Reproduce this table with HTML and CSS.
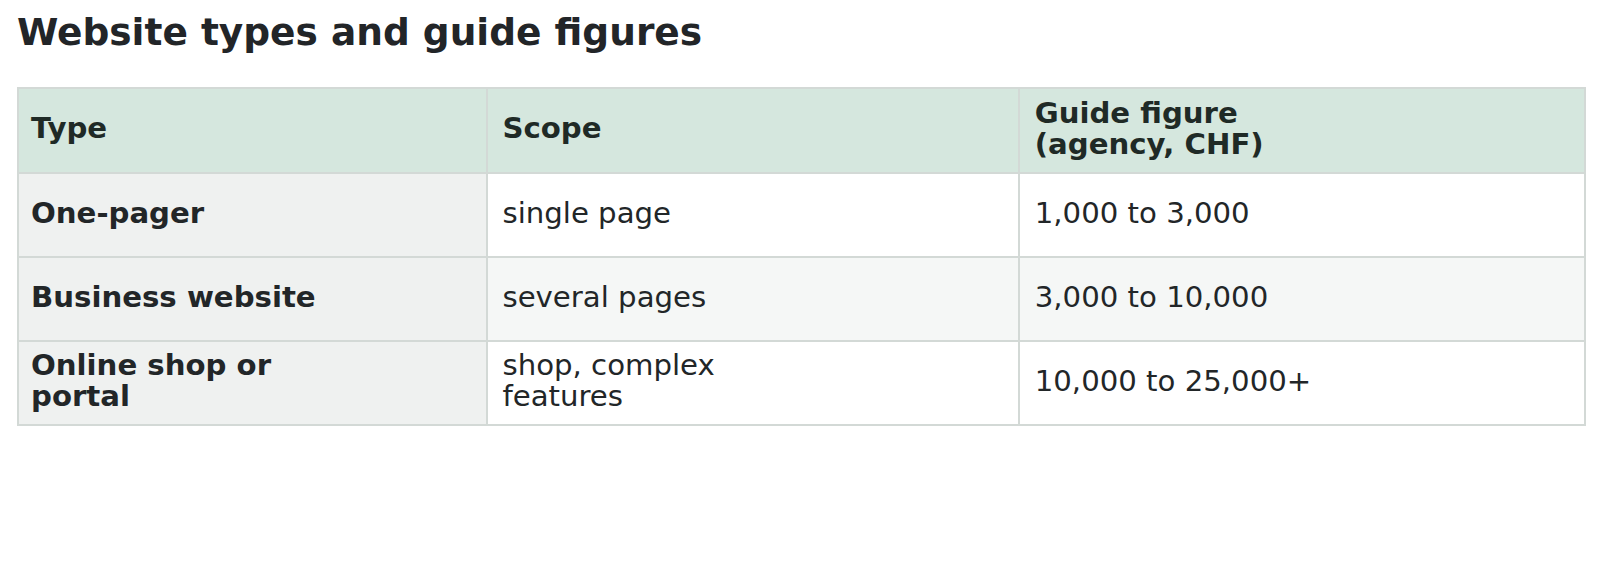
FILE: index.html
```html
<!DOCTYPE html>
<html>
<head>
<meta charset="utf-8">
<link rel="stylesheet" href="styles.css">
</head>
<body>
<h1 class="title">Website types and guide figures</h1>
<table class="guide">
  <thead>
    <tr><th class="c1">Type</th><th class="c2">Scope</th><th class="c3">Guide figure<br>(agency, CHF)</th></tr>
  </thead>
  <tbody>
    <tr><td class="type">One-pager</td><td>single page</td><td class="fig">1,000 to 3,000</td></tr>
    <tr class="alt"><td class="type">Business website</td><td>several pages</td><td class="fig">3,000 to 10,000</td></tr>
    <tr><td class="type">Online shop or<br>portal</td><td>shop, complex<br>features</td><td class="fig">10,000 to 25,000+</td></tr>
  </tbody>
</table>
</body>
</html>
```
FILE: styles.css
```css
html, body { margin: 0; padding: 0; background: #fff; }
body {
  font-family: "DejaVu Sans", Verdana, sans-serif;
  color: #222628;
  padding: 12px 17px;
}
.title {
  margin: 0 0 34px 0;
  font-size: 37.5px;
  line-height: 41px;
  font-weight: bold;
  color: #222528;
}
.guide {
  border-collapse: collapse;
  width: 1569px;
  font-size: 29.2px;
  line-height: 31px;
}
.guide th, .guide td {
  border: 2px solid #d3d9d6;
  padding: 8px 14px 12px 14px;
  height: 62px;
  text-align: left;
  vertical-align: middle;
}
.guide th { height: 63px; }
.c1 { width: 440px; }
.c2 { width: 502px; }
.c3 { width: 537px; }
.guide .c1, .guide td.type { padding-left: 12px; padding-right: 16px; }
.guide .c3, .guide td.fig { padding-left: 15px; padding-right: 13px; }
.guide th {
  background: #d5e7de;
  font-weight: bold;
  color: #1f2a26;
}
.guide td { background: #fff; }
.guide tr.alt td { background: #f5f7f6; }
.guide td.type, .guide tr.alt td.type {
  background: #eff1f0;
  font-weight: bold;
}
```
